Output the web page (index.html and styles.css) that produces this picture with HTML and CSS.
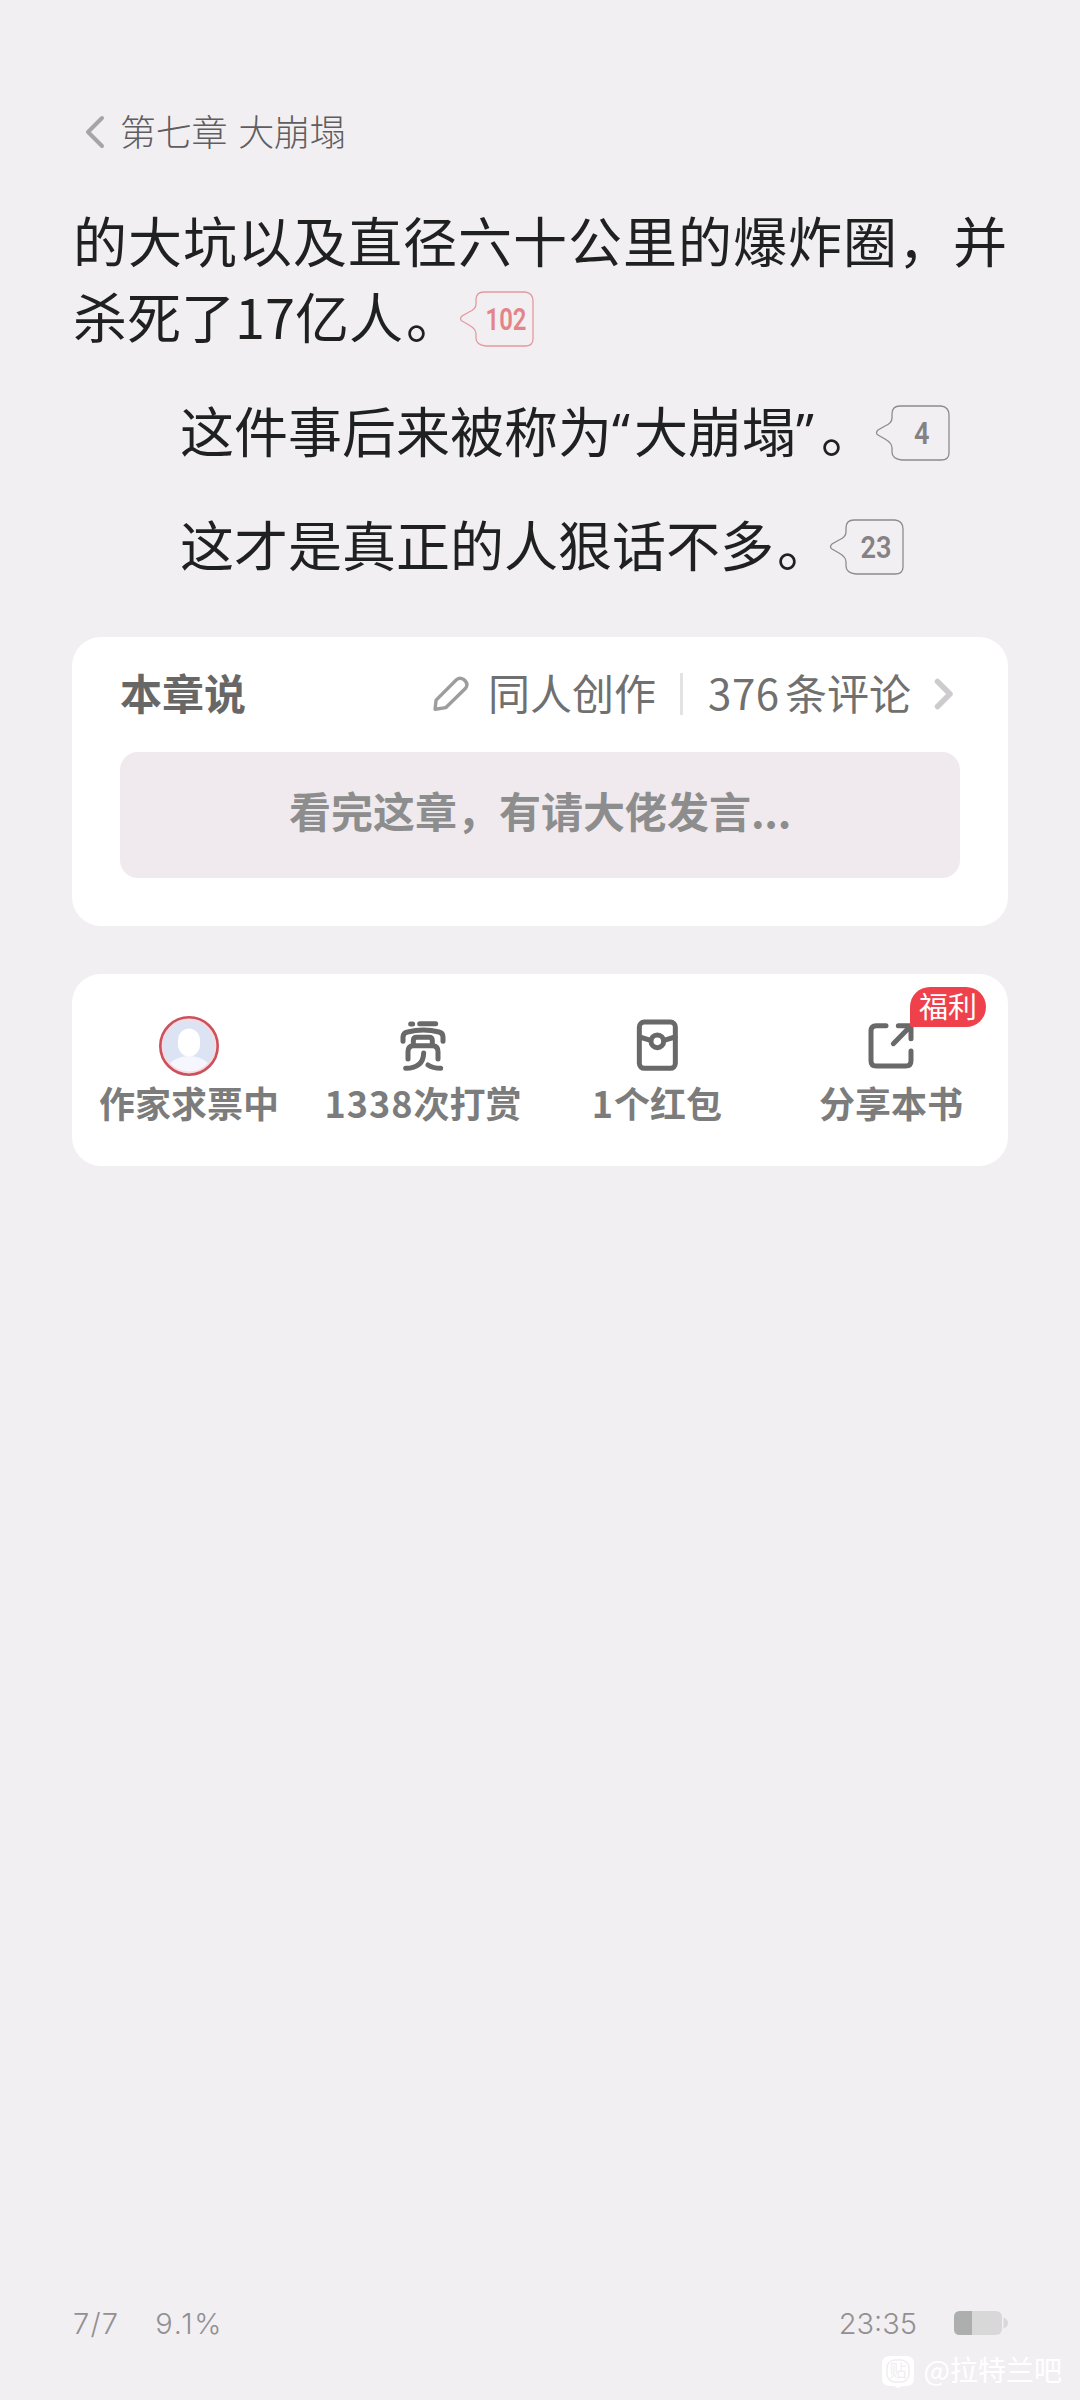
FILE: index.html
```html
<!DOCTYPE html>
<html lang="zh-CN">
<head>
<meta charset="utf-8">
<title>第七章 大崩塌</title>
<link rel="stylesheet" href="styles.css">
</head>
<body>
<div class="page">
  <header class="header">
    <svg class="back" viewBox="0 0 20 34"><path d="M17 3 3 17 17 31"/></svg>
    <h1 class="chapter">第七章 大崩塌</h1>
  </header>

  <main>
    <article class="text">
      <p class="line wide">的大坑以及直径六十公里的爆炸圈，并</p>
      <p class="line">杀死了17亿人<span class="stop">。</span><svg class="bubble hot b1" viewBox="0 0 74 56"><path d="M24 1H65Q73 2 73 10V48Q73 55 65 55H26Q16 54 16 47V43Q16 38 9 34L2 30Q-1 28 2 25L9 21Q16 18 16 13V9Q16 1 24 1Z"/><text x="25.500" y="38.5" textLength="41" lengthAdjust="spacingAndGlyphs">102</text></svg></p>
      <p class="line para">这件事后来被称为<span class="quote">“</span>大崩塌<span class="quote">”</span><span class="stop">。</span><svg class="bubble b2" viewBox="0 0 74 56"><path d="M24 1H65Q73 2 73 10V48Q73 55 65 55H26Q16 54 16 47V43Q16 38 9 34L2 30Q-1 28 2 25L9 21Q16 18 16 13V9Q16 1 24 1Z"/><text x="38" y="38.5" textLength="15.500" lengthAdjust="spacingAndGlyphs">4</text></svg></p>
      <p class="line para">这才是真正的人狠话不多<span class="stop">。</span><svg class="bubble b3" viewBox="0 0 74 56"><path d="M24 1H65Q73 2 73 10V48Q73 55 65 55H26Q16 54 16 47V43Q16 38 9 34L2 30Q-1 28 2 25L9 21Q16 18 16 13V9Q16 1 24 1Z"/><text x="30.500" y="38.5" textLength="31" lengthAdjust="spacingAndGlyphs">23</text></svg></p>
    </article>

    <section class="card talk">
      <div class="talk-head">
        <h2 class="talk-title">本章说</h2>
        <svg class="pencil" viewBox="1122 138 112 112"><path d="M1131 239 1134 212 1194 152Q1204 143 1215 151 1231 163 1221 177L1163 234Z"/></svg>
        <span class="fan">同人创作</span>
        <span class="divider"></span>
        <span class="count"><span class="digits">376</span>条评论</span>
        <svg class="more" viewBox="0 0 20 32"><path d="M3.5 3.500 16 16 3.500 28.500"/></svg>
      </div>
      <div class="talk-input">看完这章，有请大佬发言<span class="dots">...</span></div>
    </section>

    <section class="card actions">
      <div class="action">
        <svg class="icon" viewBox="0 0 60 60">
          <defs><clipPath id="face"><circle cx="30" cy="30" r="27"/></clipPath></defs>
          <circle cx="30" cy="30" r="27" fill="#dce4f3"/>
          <g clip-path="url(#face)"><ellipse cx="30" cy="62" rx="26" ry="22" fill="#f6f7fe"/><rect x="19" y="12.500" width="22" height="28" rx="11" ry="12" fill="#fff"/></g>
          <circle cx="30" cy="30" r="27" fill="none" stroke="#f8dbe1" stroke-width="3"/>
          <circle cx="30" cy="30" r="28.700" fill="none" stroke="#cb515c" stroke-width="2.600"/>
        </svg>
        <span class="label">作家求票中</span>
      </div>
      <div class="action">
        <svg class="icon line-icon" viewBox="999 168 180 180">
          <path d="M1052 192H1058M1079 191H1127M1029 244V231Q1030 218 1043 216Q1090 204 1137 216Q1149 219 1149 231V244M1060 257V242Q1060 232 1070 232H1107Q1117 232 1117 242V257M1044 297V275Q1044 257 1060 257H1118Q1134 257 1134 275V297M1091 279Q1090 324 1037 325M1104 315Q1119 325 1142 325"/>
        </svg>
        <span class="label"><span class="num">1338</span>次打赏</span>
      </div>
      <div class="action">
        <svg class="icon line-icon" viewBox="262 168 180 180">
          <rect x="299" y="186" width="108" height="139" rx="15"/><circle cx="353" cy="244" r="19"/><path d="M300 231 333 241M406 231 373 241"/>
        </svg>
        <span class="label"><span class="num">1</span>个红包</span>
      </div>
      <div class="action">
        <svg class="icon line-icon" viewBox="963 168 180 180">
          <path d="M1038 197H1009Q993 197 993 213V302Q993 318 1009 318H1097Q1113 318 1113 302V273M1075 197H1113V236M1113 197 1060 251"/>
        </svg>
        <span class="label">分享本书</span>
        <span class="badge">福利</span>
      </div>
    </section>
  </main>

  <footer class="footer">
    <span class="pages">7/7</span>
    <span class="percent">9.1%</span>
    <span class="time">23:35</span>
    <svg class="battery" viewBox="0 0 54 24"><rect width="48" height="24" rx="6" fill="#d9d8d9"/><path d="M18 0H6Q0 0 0 6V18Q0 24 6 24H18Z" fill="#adafae"/><path d="M49.500 6.500Q54 8 54 12T49.500 17.500Z" fill="#d9d8d9"/></svg>
  </footer>
  <div class="watermark">
    <svg class="mark" viewBox="0 0 32 32"><path fill="#fff" d="M8 0H24Q32 0 32 8V22Q32 30 24 30H20L16 32 12 30H8Q0 30 0 22V8Q0 0 8 0Z"/><rect x="5" y="4" width="22" height="22" rx="8" fill="none" stroke="#f0edf0" stroke-width="1.500"/><text x="7.500" y="21">贴</text></svg>
    <span>@拉特兰吧</span>
  </div>
</div>
</body>
</html>
```
FILE: styles.css
```css
* { box-sizing: border-box; margin: 0; padding: 0; }
body {
  background: #f2eff2;
  font-family: "Noto Sans CJK SC", sans-serif;
}
.page {
  width: 1080px;
  height: 2400px;
  display: flex;
  flex-direction: column;
  padding: 100px 72px 0;
  overflow: hidden;
}
svg { flex: none; display: block; }

.header { display: flex; align-items: center; height: 64px; padding-left: 13px; }
.back { width: 20px; height: 34px; fill: none; stroke: #a6a4a6; stroke-width: 4; stroke-linecap: round; stroke-linejoin: round; }
.chapter { margin: -4px 0 0 15px; font-size: 36px; font-weight: 300; line-height: 60px; letter-spacing: -0.2px; word-spacing: 3px; color: #5f5d5f; white-space: pre; }

.text { padding: 38px 0 0 1px; color: #1f2020; }
.line { display: flex; height: 76px; font-size: 54px; line-height: 76px; white-space: nowrap; }
.wide { letter-spacing: 1px; }
.para { margin-top: 38px; padding-left: 107px; }
.quote { width: 22px; font-family: "Noto Sans", sans-serif; font-size: 50px; }
.stop { padding-left: 3px; }
.bubble { width: 74px; height: 56px; margin-top: 13px; overflow: visible; }
.bubble path { fill: none; stroke: #8d8b8d; stroke-width: 1.3; }
.bubble text { font: 600 31px Roboto, sans-serif; fill: #848284; }
.hot path { stroke: #e39a9e; }
.hot text { fill: #e38489; }
.b1 { margin-left: 0; }
.b2 { margin-left: 1px; }
.b3 { margin-left: -1px; }

.card { background: #fff; border-radius: 29px; }
.talk { height: 289px; margin-top: 55px; padding: 26px 48px 0; }
.talk-head { display: flex; align-items: center; height: 62px; font-size: 42px; line-height: 62px; color: #6f706f; }
.talk-title { font-size: 42px; line-height: 62px; font-weight: 700; color: #666766; margin: -4px auto 0 0; }
.pencil { width: 38px; height: 38px; fill: none; stroke: #9d9d9d; stroke-width: 10; stroke-linejoin: round; margin-right: 18px; }
.fan, .count { margin-top: -4px; }
.divider { width: 3px; height: 42px; margin: 0 25px 0 24px; background: #e3e3e3; }
.digits { display: inline-block; width: 77px; letter-spacing: .6px; }
.more { width: 20px; height: 32px; margin: 0 6px 0 23px; fill: none; stroke: #cdcbcd; stroke-width: 5.5; stroke-linecap: round; stroke-linejoin: round; }
.talk-input { height: 126px; margin-top: 27px; border-radius: 18px; background: #f0eaee; color: #8c8d8c; font-size: 42px; font-weight: 700; line-height: 115px; text-align: center; }
.dots { letter-spacing: -0.3px; }

.actions { display: grid; grid-template-columns: repeat(4, 234px); height: 192px; margin-top: 48px; padding-top: 42px; }
.action { position: relative; display: flex; flex-direction: column; align-items: center; }
.icon { width: 60px; height: 60px; }
.line-icon { fill: none; stroke: #696969; stroke-width: 15; stroke-linecap: round; stroke-linejoin: round; }
.label { margin-top: 2px; font-size: 36px; font-weight: 700; line-height: 48px; color: #7b7c7b; white-space: nowrap; }
.num { letter-spacing: 1px; }
.badge { position: absolute; left: 136px; top: -29px; width: 76px; height: 40px; border-radius: 20px 20px 20px 2px; background: #ee414b; color: #fff; font-size: 29px; line-height: 36px; text-align: center; }

.footer { display: flex; align-items: center; height: 40px; margin-top: auto; font-family: Inter, sans-serif; font-size: 29px; font-weight: 300; color: #929092; }
.pages { padding-left: 1px; letter-spacing: 1.2px; }
.percent { margin-left: 36px; letter-spacing: 1.8px; }
.time { margin-left: auto; margin-right: 37px; }
.battery { width: 54px; height: 24px; }
.watermark { display: flex; align-items: center; gap: 10px; height: 57px; margin-right: -54px; justify-content: flex-end; color: #fff; font-size: 28px; line-height: 40px; }
.watermark span { margin-top: -5px; }
.mark { width: 32px; height: 32px; }
.mark text { font-size: 17px; fill: #f0edf0; }
```
